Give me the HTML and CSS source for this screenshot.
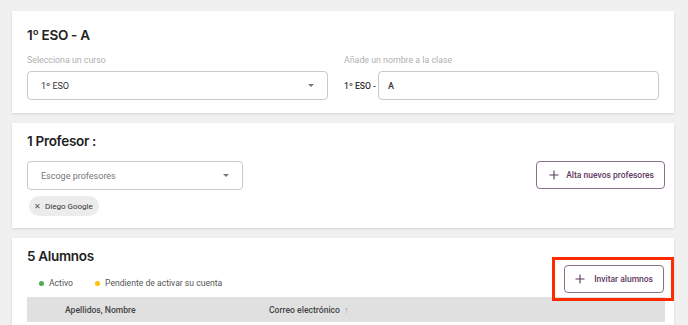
FILE: index.html
```html
<!DOCTYPE html>
<html lang="es">

<head>
    <meta charset="UTF-8">
    <meta name="viewport" content="width=device-width, initial-scale=1.0">
    <title>1º ESO - A</title>
    <link rel="stylesheet" href="styles.css">
</head>

<body>
    <section class="card card-class">
        <h2 class="card-title">1º ESO - A</h2>
        <div class="fields">
            <div class="field">
                <label class="field-label">Selecciona un curso</label>
                <div class="select">
                    <span>1º ESO</span>
                    <span class="caret"></span>
                </div>
            </div>
            <div class="field">
                <label class="field-label">Añade un nombre a la clase</label>
                <div class="name-row">
                    <span class="prefix">1º ESO -</span>
                    <div class="input">A</div>
                </div>
            </div>
        </div>
    </section>

    <section class="card card-teachers">
        <h2 class="card-title">1 Profesor :</h2>
        <div class="teacher-row">
            <div class="teacher-pick">
                <div class="select select-teachers">
                    <span class="placeholder">Escoge profesores</span>
                    <span class="caret"></span>
                </div>
                <span class="chip"><span class="chip-x">✕</span>Diego Google</span>
            </div>
            <button class="outline-button">
                <svg width="10" height="10" viewBox="0 0 10 10"><path d="M5 0.5v9M0.5 5h9" stroke="#5a3a5a" stroke-width="1.1" fill="none"/></svg>
                Alta nuevos profesores
            </button>
        </div>
    </section>

    <section class="card card-students">
        <div class="students-head">
            <div>
                <h2 class="card-title">5 Alumnos</h2>
                <div class="legend">
                    <span class="legend-item"><span class="dot dot-green"></span>Activo</span>
                    <span class="legend-item"><span class="dot dot-yellow"></span>Pendiente de activar su cuenta</span>
                </div>
            </div>
            <div class="highlight">
                <button class="outline-button">
                    <svg width="10" height="10" viewBox="0 0 10 10"><path d="M5 0.5v9M0.5 5h9" stroke="#5a3a5a" stroke-width="1.1" fill="none"/></svg>
                    Invitar alumnos
                </button>
            </div>
        </div>
        <div class="table-head">
            <span class="col-name">Apellidos, Nombre</span>
            <span class="col-mail">Correo electrónico <span class="sort">↑</span></span>
        </div>
    </section>
</body>

</html>
```

FILE: styles.css
```css
body {
    margin: 0;
    padding: 11px 14px 0 12px;
    background-color: #f0f0f0;
    font-family: Roboto, Arial, sans-serif;
    font-size: 9px;
    color: #333;
    display: flex;
    flex-direction: column;
    gap: 10px;
    height: 325px;
    box-sizing: border-box;
    overflow: hidden;
}

.card {
    background-color: #fff;
    box-shadow: 0 1px 2px rgba(0, 0, 0, 0.12);
    padding: 14px 15px 13px 15px;
}

.card-title {
    margin: 0;
    font-family: Inter, sans-serif;
    font-weight: 600;
    font-size: 13.5px;
    line-height: 20px;
    letter-spacing: -0.3px;
    color: #222;
}

.fields {
    display: grid;
    grid-template-columns: 301px 1fr;
    gap: 16px;
    margin-top: 10px;
}

.field-label {
    display: block;
    color: #b0b0b0;
    font-size: 8.8px;
    line-height: 10px;
    margin-bottom: 6px;
}

.select,
.input {
    height: 29px;
    box-sizing: border-box;
    border: 1px solid #c9c9c9;
    border-radius: 4px;
    display: flex;
    align-items: center;
    padding: 0 13px;
    color: #333;
}

.select {
    justify-content: space-between;
}

.caret {
    width: 0;
    height: 0;
    border-left: 3.5px solid transparent;
    border-right: 3.5px solid transparent;
    border-top: 3.5px solid #777;
}

.name-row {
    display: flex;
    align-items: center;
    gap: 2px;
}

.prefix {
    font-weight: 500;
    font-size: 8.6px;
    white-space: nowrap;
}

.input {
    flex: 1;
    padding: 0 9px;
    font-weight: 500;
}

.card-teachers {
    padding: 8px 9px 12px 15px;
}

.teacher-row {
    display: flex;
    justify-content: space-between;
    align-items: flex-start;
    margin-top: 10px;
}

.teacher-pick {
    display: flex;
    flex-direction: column;
    align-items: flex-start;
    gap: 6px;
}

.select-teachers {
    width: 216px;
}

.placeholder {
    color: #777;
}

.chip {
    margin-left: 2px;
    background-color: #ececec;
    border-radius: 10px;
    height: 20px;
    box-sizing: border-box;
    padding: 0 6px 0 5px;
    display: flex;
    align-items: center;
    gap: 4px;
    font-size: 8px;
    color: #333;
}

.chip-x {
    font-size: 8px;
    color: #555;
}

.outline-button {
    display: flex;
    align-items: center;
    gap: 7px;
    height: 28px;
    box-sizing: border-box;
    background: #fff;
    border: 1px solid #8d6f8d;
    border-radius: 4px;
    padding: 0 10px 0 12px;
    font-family: Roboto, Arial, sans-serif;
    font-size: 8.5px;
    font-weight: 500;
    color: #5e3a5e;
    margin-top: 0;
}

.card-students {
    flex: 1;
    padding: 8px 9px 0 15px;
}

.students-head {
    display: flex;
    justify-content: space-between;
}

.legend {
    display: flex;
    gap: 22px;
    margin: 10px 0 0 12px;
    color: #555;
    font-size: 8.6px;
    line-height: 14px;
}

.legend-item {
    display: flex;
    align-items: center;
    gap: 5px;
}

.dot {
    width: 5px;
    height: 5px;
    border-radius: 50%;
}

.dot-green {
    background-color: #4caf50;
}

.dot-yellow {
    background-color: #ffc107;
}

.highlight {
    border: 3px solid #ff2a00;
    padding: 5px 7px 5px 9px;
    margin: 11px -9px 0 0;
    align-self: flex-start;
}

.highlight .outline-button {
    padding: 0 10px 0 10px;
    gap: 9px;
}

.table-head {
    margin-top: -4px;
    height: 25px;
    background-color: #e0e0e0;
    display: flex;
    align-items: center;
    font-size: 8.6px;
    font-weight: 500;
    color: #444;
    width: 638px;
}

.col-name {
    margin-left: 38px;
    width: 204px;
}

.sort {
    color: #999;
    margin-left: 2px;
}
```
